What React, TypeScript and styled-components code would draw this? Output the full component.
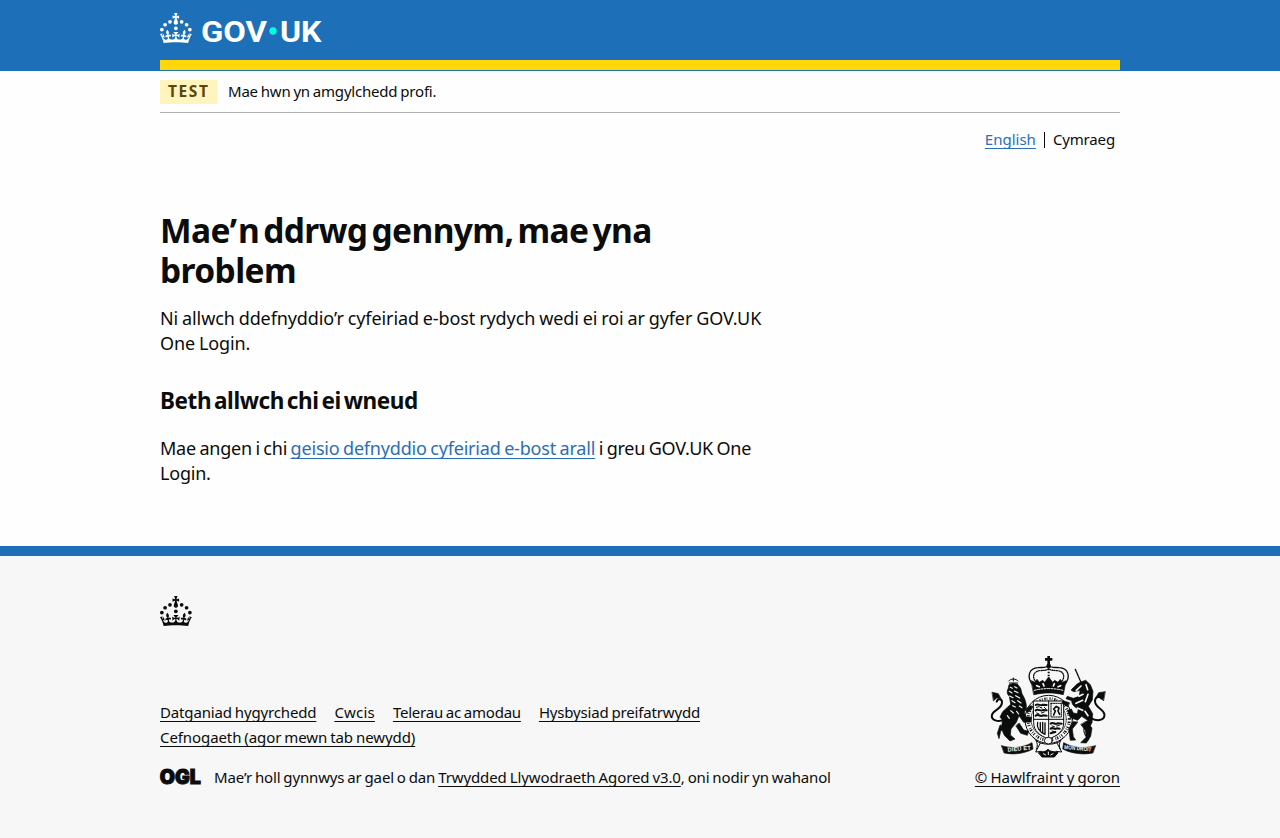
import React from 'react';
import styled, { createGlobalStyle } from 'styled-components';

const GlobalStyle = createGlobalStyle`
  *, *::before, *::after { box-sizing: border-box; }
  body { margin: 0; background: #fefefe; color: #0b0c0c; font-family: "Noto Sans", "Open Sans", sans-serif; }
  h1, h2, p, ul { margin: 0; padding: 0; }
  ul { list-style: none; }
`;

const Page = styled.div`
  min-height: 838px;
  display: flex;
  flex-direction: column;
`;

const Container = styled.div`
  width: 960px;
  margin: 0 auto;
`;

const Header = styled.header`
  background: #1d70b8;
  height: 71px;
`;

const HeaderBar = styled(Container)`
  height: 70px;
  padding-top: 13px;
  border-bottom: 10px solid #ffd60a;
  svg { display: block; }
`;

const PhaseBanner = styled.div`
  display: flex;
  align-items: center;
  gap: 11px;
  height: 42px;
  border-bottom: 1px solid #adafb1;
`;

const Tag = styled.strong`
  background: #fff4bd;
  color: #5b4708;
  width: 57px;
  height: 24px;
  padding-left: 8px;
  font-size: 15.5px;
  line-height: 23px;
  letter-spacing: 1.6px;
`;

const Small = styled.span<{ $ls?: number }>`
  font-size: 15px;
  line-height: 25px;
  letter-spacing: ${p => p.$ls ?? -0.15}px;
  word-spacing: -0.8px;
`;

const Link = styled.a<{ $tone?: 'blue' | 'dark'; $ls?: number }>`
  color: ${p => (p.$tone === 'blue' ? '#2b6fb5' : '#0b0c0c')};
  letter-spacing: ${p => (p.$ls === undefined ? 'inherit' : `${p.$ls}px`)};
  text-decoration: underline;
  text-decoration-thickness: 1px;
  text-decoration-skip-ink: none;
  text-underline-offset: 3px;
`;

const LanguageNav = styled.nav`
  display: flex;
  justify-content: flex-end;
  align-items: center;
  height: 25px;
  margin-top: 14px;
  padding-right: 5px;
`;

const Divider = styled.span`
  width: 1px;
  height: 16px;
  margin: 0 8px;
  background: #0b0c0c;
`;

const Main = styled.main`
  width: 630px;
  padding-top: 58px;
  height: 394px;
`;

const Title = styled.h1`
  font-size: 33.5px;
  line-height: 40px;
  font-weight: 700;
  letter-spacing: -0.6px;
  word-spacing: -4px;
  max-width: 560px;
`;

const Apostrophe = styled.span`
  letter-spacing: 0.8px;
`;

const Subtitle = styled.h2`
  font-size: 22.5px;
  line-height: 30px;
  font-weight: 700;
  letter-spacing: -0.4px;
  word-spacing: -2.6px;
  margin: 30px 0 20px;
`;

const Body = styled.p<{ $ls?: number; $ws?: number }>`
  font-size: 18px;
  line-height: 25px;
  letter-spacing: ${p => p.$ls ?? -0.1}px;
  word-spacing: ${p => p.$ws ?? -0.65}px;
`;

const Lead = styled(Body)`
  margin-top: 16px;
`;

const Footer = styled.footer`
  flex: 1;
  border-top: 10px solid #1d70b8;
  background: #f7f7f7;
  padding-top: 40px;
`;

const FooterRow = styled.div`
  display: flex;
  justify-content: space-between;
  align-items: flex-end;
  margin-top: 24px;
`;

const FooterLinks = styled.ul`
  display: flex;
  flex-wrap: wrap;
  column-gap: 18px;
  width: 600px;
  margin-bottom: 15px;
  li { line-height: 25px; height: 25px; }
`;

const Licence = styled.div`
  display: flex;
  align-items: center;
  height: 25px;
  gap: 13px;
`;

const Copyright = styled.div`
  display: flex;
  flex-direction: column;
  align-items: flex-end;
`;

const CrestBox = styled.div`
  padding-right: 4px;
  height: 115px;
  svg { display: block; }
`;

function CrownShape() {
  return (
    <g>
      <circle cx="20" cy="17.6" r="3.7" />
      <circle cx="10.2" cy="23.5" r="3.7" />
      <circle cx="3.7" cy="33.2" r="3.7" />
      <circle cx="31.7" cy="30.6" r="3.7" />
      <circle cx="43.3" cy="17.6" r="3.7" />
      <circle cx="53.2" cy="23.5" r="3.7" />
      <circle cx="59.7" cy="33.2" r="3.7" />
      <path d="M33.1,9.8c.2-.1.3-.3.5-.5l4.6,2.4v-6.8l-4.6,1.5c-.1-.2-.3-.3-.5-.5l1.9-5.9h-6.7l1.9,5.9c-.2.1-.3.3-.5.5l-4.6-1.5v6.8l4.6-2.4c.1.2.3.3.5.5l-2.6,8c-.9,2.8,1.2,5.7,4.1,5.7h0c3,0,5.1-2.9,4.1-5.7l-2.6-8ZM37,37.9s-3.4,3.8-4.1,6.1c2.2,0,4.2-.5,6.4-2.8l-.7,8.5c-2-2.8-4.4-4.1-5.7-3.8.1,3.1.5,6.7,5.8,7.2,3.7.3,6.7-1.5,7-3.8.4-2.6-2-4.3-3.7-1.6-1.4-4.5,2.4-6.1,4.9-3.2-1.9-4.5-1.8-7.7,2.4-10.9,3,4,2.6,7.3-1.2,11.1,2.4-1.3,6.2,0,4,4.6-1.2-2.8-3.7-2.2-4.2.2-.3,1.7.7,3.7,3,4.2,1.9.3,4.7-.9,7-5.9-1.3,0-2.4.7-3.9,1.7l2.4-8c.6,2.3,1.4,3.7,2.2,4.5.6-1.6.5-2.8,0-5.3l5,1.8c-2.6,3.6-5.2,8.7-7.3,17.5-7.4-1.1-15.7-1.7-24.5-1.7h0c-8.8,0-17.1.6-24.5,1.7-2.1-8.9-4.7-13.9-7.3-17.5l5-1.8c-.5,2.5-.6,3.7,0,5.3.8-.8,1.6-2.3,2.2-4.5l2.4,8c-1.5-1-2.6-1.7-3.9-1.7,2.3,5,5.2,6.2,7,5.9,2.3-.4,3.3-2.4,3-4.2-.5-2.4-3-3.1-4.2-.2-2.2-4.6,1.6-6,4-4.6-3.7-3.7-4.2-7.1-1.2-11.1,4.2,3.2,4.3,6.4,2.4,10.9,2.5-2.8,6.3-1.3,4.9,3.2-1.8-2.7-4.1-1-3.7,1.6.3,2.3,3.3,4.1,7,3.8,5.4-.5,5.7-4.2,5.8-7.2-1.3-.2-3.7,1-5.7,3.8l-.7-8.5c2.2,2.3,4.2,2.7,6.4,2.8-.7-2.3-4.1-6.1-4.1-6.1h10.6,0Z" />
    </g>
  );
}

function GovUkLogo() {
  return (
    <svg width="162" height="30" viewBox="0 0 324 60" fill="#fff" overflow="visible" role="img" aria-label="GOV.UK">
      <CrownShape />
      <g fontFamily="Roboto, sans-serif" fontWeight="700" fontSize="60">
        <text x="82" y="57.5" textLength="132" lengthAdjust="spacingAndGlyphs">GOV</text>
        <text x="240" y="57.5" textLength="83" lengthAdjust="spacingAndGlyphs">UK</text>
      </g>
      <circle cx="226" cy="36" r="7.3" fill="#00ffe0" />
    </svg>
  );
}

function FooterCrown() {
  return (
    <svg width="32" height="30" viewBox="0 0 64 60" fill="#0b0c0c" display="block" aria-hidden="true">
      <CrownShape />
    </svg>
  );
}

function OglLogo() {
  return (
    <svg width="41" height="17" viewBox="0 0 41 17" overflow="visible" role="img" aria-label="OGL">
      <text x="-0.2" y="15.1" textLength="41" lengthAdjust="spacingAndGlyphs" fontFamily="Inter, sans-serif" fontWeight="900" fontSize="19.5" fill="#0b0c0c" stroke="#0b0c0c" strokeWidth="1">OGL</text>
    </svg>
  );
}

function RoyalArms() {
  return (
    <svg width="136" height="112" viewBox="0 0 408 336" fill="none" stroke="#0b0c0c" strokeLinecap="round" strokeLinejoin="round" aria-hidden="true">
      {/* crown */}
      <path d="M206 18v27M195 28h22" strokeWidth="8" strokeLinecap="butt" />
      <circle cx="206" cy="48" r="7" fill="#0b0c0c" stroke="none" />
      <path d="M160 106c-24-26-11-52 14-53 16-1 25 0 32-5 7 5 16 4 32 5 25 1 38 27 14 53" strokeWidth="4" />
      <path d="M168 96c-15-18-4-33 11-34 13-1 22-1 27-6 5 5 14 5 27 6 15 1 26 16 11 34" strokeWidth="4" strokeDasharray="3 4" />
      <path d="M206 56v33" strokeWidth="6" strokeDasharray="5 4" strokeLinecap="butt" />
      <path d="M154 92l11 5 6-9 7 9 10-6 6 6 12-16 12 16 6-6 10 6 7-9 6 9 11-5-8 42c-30-7-58-7-88 0z" fill="#0b0c0c" strokeWidth="2" />
      <path d="M163 121c28-7 58-7 86 0" stroke="#f7f7f7" strokeWidth="3" strokeDasharray="6 4" />
      <path d="M170 107l8 3M189 101l3 7M223 101l-3 7M242 107l-8 3" stroke="#f7f7f7" strokeWidth="5" />
      {/* garter and shield */}
      <ellipse cx="206" cy="208" rx="71" ry="72" strokeWidth="3" fill="#f7f7f7" />
      <ellipse cx="206" cy="208" rx="62" ry="62" strokeWidth="9" strokeDasharray="2 5 4 3 2 7 3 4" strokeLinecap="butt" />
      <ellipse cx="206" cy="208" rx="53" ry="54" strokeWidth="2" />
      <path d="M161 153h90v66c0 24-18 38-45 48-27-10-45-24-45-48z" fill="#f7f7f7" strokeWidth="3" />
      <path d="M206 153v112M161 208h90" strokeWidth="3" />
      <path d="M167 165c9-6 14 5 22-1l11 1M167 181c9-6 14 5 22-1l11 1M167 197c9-6 14 5 22-1l11 1M212 221c8-6 14 5 21-1l12 1M212 236c8-6 12 5 19-1l8 1M212 250l14-4" strokeWidth="6" />
      <path d="M169 172l8-2M180 172l6 2M193 172l4 4M170 189l7 3M184 189l9-3M216 228l7 2M230 228l8-2M216 243l7 2" strokeWidth="3" />
      <path d="M213 160h31v41h-31z" strokeWidth="3" strokeDasharray="4 3" />
      <path d="M221 195l5-12-5-6 8-8 8 5-3 9 5 10" strokeWidth="5" />
      <path d="M173 217c-3 13 3 28 22 36v-34M181 218v26M188 217v32" strokeWidth="4" />
      {/* lion */}
      <path d="M86 93c6-8 22-8 28 0M100 84v9M88 99h25" strokeWidth="3" />
      <g fill="#0b0c0c">
        <path d="M84 118l3-14 12-4 14 3 9 12 4 16 8 15 4 14c3 12 0 21-5 26l4 14 18 2-2 14-22 1-14-20-8 20-16 20-2 18 14 12-15 6-17-17-8-18 2-28-7-9 8-16 24-22-4-24c-6-5-9-13-4-21z" strokeWidth="2" />
        <path d="M78 228l-16 16-5 22-5-16 8-24zM118 220l13 20 15 4-4 12-20-6-14-22z" strokeWidth="2" />
        <path d="M138 176l14-9 6 6-16 16z" strokeWidth="2" />
      </g>
      <path d="M74 208c-20 11-42 2-38-14 4-15 29-16 30-36 1-12-12-14-16-3" strokeWidth="6" />
      <path d="M37 127l18 4 8 15-13-2-9 8z" fill="#0b0c0c" strokeWidth="2" />
      <path d="M91 112l6 3M104 110l7 4M88 124l8 5M103 123l11 5M89 138l10 5M107 137l12 7M96 152l9 6M113 152l10 7M98 167l8 4M118 168l8 5M92 182l8 7M82 197l6 8M110 184l6 8" stroke="#f7f7f7" strokeWidth="3.5" />
      {/* unicorn */}
      <path d="M286 58l17 39" strokeWidth="4" strokeDasharray="5 2" />
      <g fill="#0b0c0c">
        <path d="M302 96l15-5 14 13 8 20-2 26-12 19 13 22-2 27-14 24-7-8 8-23-18-12-12 12-22-8-9-22 12-4 6 12 12 2 3-15c-12-4-20-13-20-24l-17-6 4-7 18 6 18-6 2-18-19 4-8-5 17-17z" strokeWidth="2" />
        <path d="M320 214l16 20-4 25-13 20-17-1 17-17-3-20-13-17zM268 158l-19-6-4 8 18 10zM293 217l-16 20 3 23 7 10-16 1-5-34 12-22z" strokeWidth="2" />
      </g>
      <path d="M333 205c24 11 43 4 40-13-3-16-28-19-28-38 0-13 12-18 20-8" strokeWidth="6" />
      <path d="M375 125l-19 3-9 15 15-1 8 10z" fill="#0b0c0c" strokeWidth="2" />
      <path d="M303 108l-14 13M318 104l5 15M309 133l-12 6M324 133l-8 22M288 160l20-9M292 174l16 7M315 184l9 13" stroke="#f7f7f7" strokeWidth="5" />
      <path d="M321 176c18 16 2 40-7 55-7 15 4 27 11 38" strokeWidth="3.5" strokeDasharray="6 3" />
      {/* compartment */}
      <path d="M65 287c29 9 60 8 91-9l3 19c-27 14-57 18-86 12zM346 287c-29 9-64 8-95-9l-3 19c27 14 61 18 90 12z" fill="#0b0c0c" strokeWidth="2" />
      <g fill="#f7f7f7" stroke="none" fontFamily="Liberation Sans, sans-serif" fontWeight="700" fontSize="17">
        <text x="83" y="305" textLength="70" transform="rotate(-5 83 305)">DIEU ET</text>
        <text x="252" y="297" textLength="82" lengthAdjust="spacingAndGlyphs" transform="rotate(5 252 297)">MON DROIT</text>
      </g>
      <path d="M160 262c10 8 16 22 9 36M250 262c-10 8-16 22-9 36M169 272c12 14 60 15 73 0M181 279l-14 27 17-2M231 279l14 27-17-2" strokeWidth="3" />
      <ellipse cx="205" cy="272" rx="12" ry="10" strokeWidth="3" fill="#f7f7f7" />
      <path d="M176 308c10-5 19 0 28-10 10 10 20 5 30 10l-11 13h-36z" fill="#0b0c0c" strokeWidth="3" />
      <path d="M190 311l7 4M205 306v8M219 311l-7 4" stroke="#f7f7f7" strokeWidth="3" />
    </svg>
  );
}

const footerLinks: { text: string; ls: number }[] = [
  { text: 'Datganiad hygyrchedd', ls: -0.15 },
  { text: 'Cwcis', ls: 0.2 },
  { text: 'Telerau ac amodau', ls: -0.23 },
  { text: 'Hysbysiad preifatrwydd', ls: -0.17 },
  { text: 'Cefnogaeth (agor mewn tab newydd)', ls: -0.09 },
];

export default function App() {
  return (
    <Page>
      <GlobalStyle />
      <Header>
        <HeaderBar><GovUkLogo /></HeaderBar>
      </Header>
      <Container>
        <PhaseBanner>
          <Tag>TEST</Tag>
          <Small $ls={-0.2}>Mae hwn yn amgylchedd profi.</Small>
        </PhaseBanner>
        <LanguageNav>
          <Small $ls={0}><Link $tone="blue">English</Link></Small>
          <Divider />
          <Small>Cymraeg</Small>
        </LanguageNav>
        <Main>
          <Title>Mae<Apostrophe>’</Apostrophe>n ddrwg gennym, mae yna broblem</Title>
          <Lead>Ni allwch ddefnyddio’r cyfeiriad e-bost rydych wedi ei roi ar gyfer GOV.UK One Login.</Lead>
          <Subtitle>Beth allwch chi ei wneud</Subtitle>
          <Body $ls={-0.22} $ws={-0.95}>
            Mae angen i chi <Link $tone="blue" $ls={-0.19}>geisio defnyddio cyfeiriad e-bost arall</Link> i greu GOV.UK One Login.
          </Body>
        </Main>
      </Container>
      <Footer>
        <Container>
          <FooterCrown />
          <FooterRow>
            <div>
              <FooterLinks>
                {footerLinks.map(l => (
                  <li key={l.text}><Small $ls={l.ls}><Link>{l.text}</Link></Small></li>
                ))}
              </FooterLinks>
              <Licence>
                <OglLogo />
                <Small>
                  Mae’r holl gynnwys ar gael o dan <Link $ls={-0.1}>Trwydded Llywodraeth Agored v3.0</Link>, oni nodir yn wahanol
                </Small>
              </Licence>
            </div>
            <Copyright>
              <CrestBox><RoyalArms /></CrestBox>
              <Small $ls={0}><Link>© Hawlfraint y goron</Link></Small>
            </Copyright>
          </FooterRow>
        </Container>
      </Footer>
    </Page>
  );
}
